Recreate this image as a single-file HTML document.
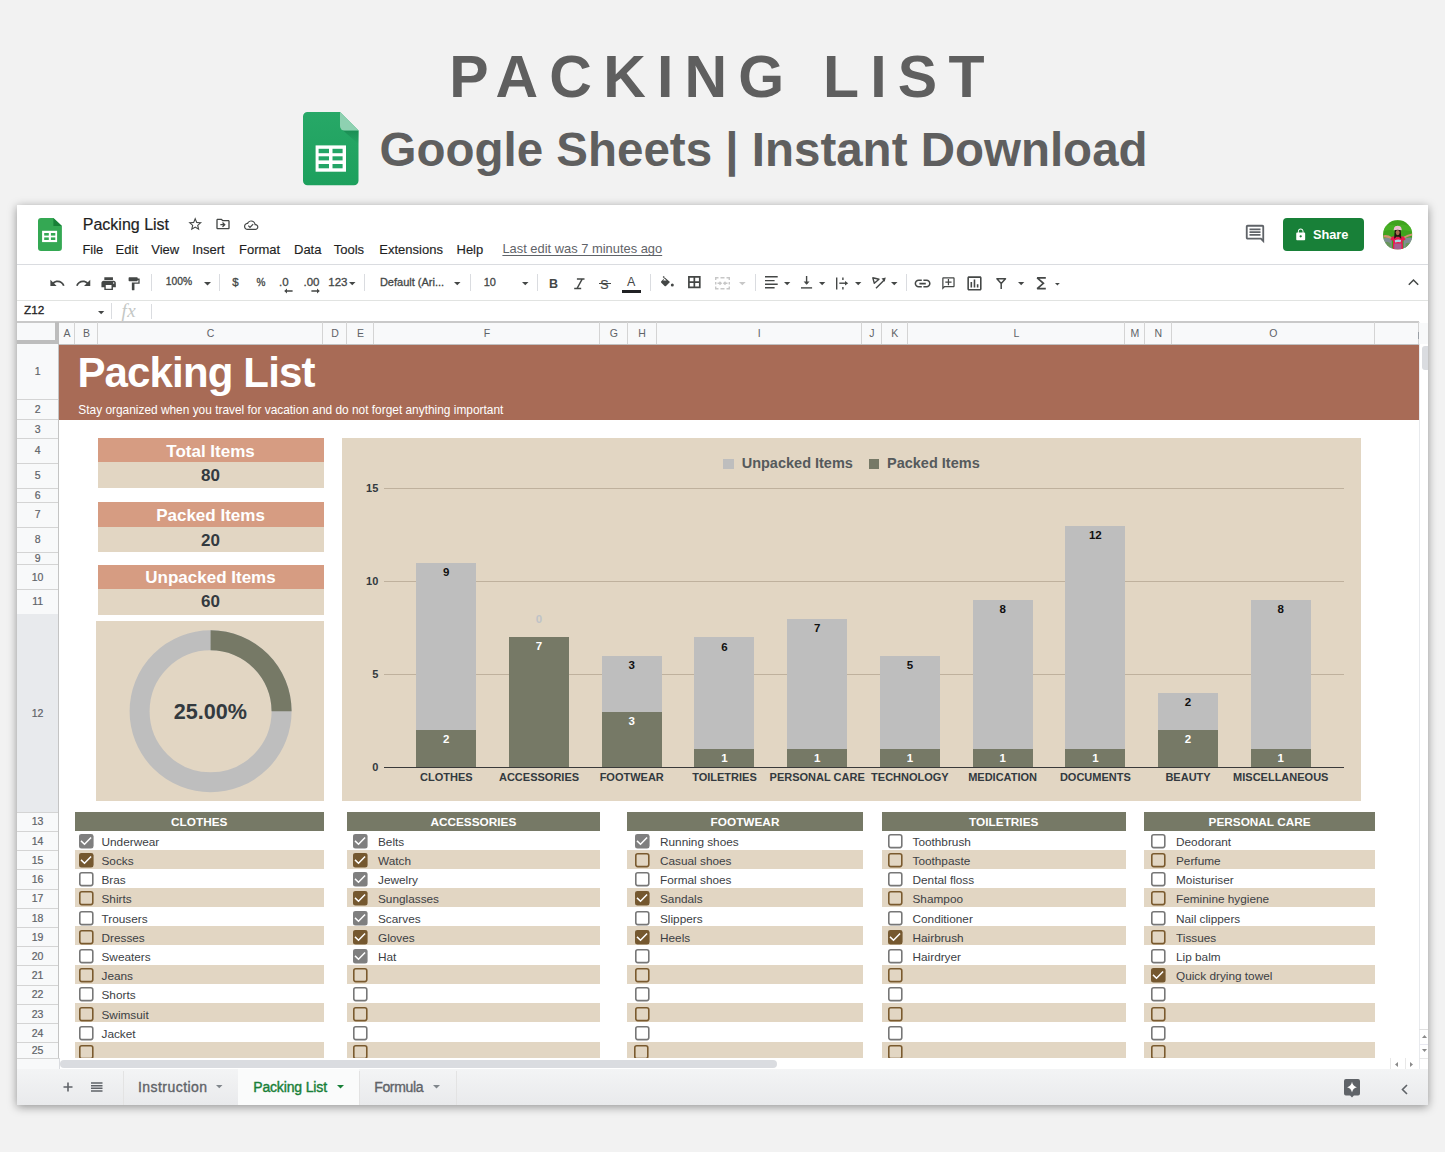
<!DOCTYPE html><html><head><meta charset="utf-8"><style>
*{margin:0;padding:0;box-sizing:border-box}
html,body{width:1445px;height:1152px;overflow:hidden;background:#f2f2f2;font-family:"Liberation Sans", sans-serif;position:relative}
.a{position:absolute}
.t{position:absolute;white-space:nowrap;line-height:1}
svg{position:absolute;overflow:visible}
</style></head><body><div class="t" style="left:722.5px;transform:translateX(-50%);top:48.06px;font-size:59px;color:#5f5f5f;font-weight:700;letter-spacing:11.2px;">PACKING LIST</div>
<svg style="left:303.4px;top:111.6px" width="56" height="74" viewBox="0 0 56 74">
<defs><linearGradient id="lg" x1="0" y1="0" x2="0" y2="1"><stop offset="0" stop-color="#27a867"/><stop offset="1" stop-color="#1da05d"/></linearGradient></defs><path d="M4.5,0 H37 L55.5,18.5 V68.7 a4.5,4.5 0 0 1 -4.5,4.5 H4.5 a4.5,4.5 0 0 1 -4.5,-4.5 V4.5 a4.5,4.5 0 0 1 4.5,-4.5z" fill="url(#lg)"/>
<defs><linearGradient id="fs" x1="0" y1="0" x2="0" y2="1"><stop offset="0" stop-color="#17834d" stop-opacity="0.7"/><stop offset="1" stop-color="#17834d" stop-opacity="0"/></linearGradient></defs><path d="M40,18.5 L55.5,32 V18.5z" fill="url(#fs)"/>
<path d="M37,0 L55.5,18.5 H41.5 a4.5,4.5 0 0 1 -4.5,-4.5z" fill="#8ed1b1"/>
<rect x="12.6" y="33.4" width="30.4" height="26.3" fill="#fff"/>
<g fill="#23a566"><rect x="15.6" y="36.8" width="10.4" height="4.4"/><rect x="29.5" y="36.8" width="10.1" height="4.4"/>
<rect x="15.6" y="44.3" width="10.4" height="4.1"/><rect x="29.5" y="44.3" width="10.1" height="4.1"/>
<rect x="15.6" y="52" width="10.4" height="4.3"/><rect x="29.5" y="52" width="10.1" height="4.3"/></g>
</svg>
<div class="t" style="left:379.5px;top:125.79px;font-size:47.5px;color:#5f5f5f;font-weight:700;letter-spacing:0px;">Google Sheets | Instant Download</div>
<div class="a" style="left:17px;top:205px;width:1411px;height:900px;background:#fff;box-shadow:0 2px 9px rgba(0,0,0,0.4);"></div>
<svg style="left:38px;top:218px" width="24" height="33" viewBox="0 0 24 33">
<path d="M3,0 H15.4 L23.9,8 V30 a3,3 0 0 1 -3,3 H3 a3,3 0 0 1 -3,-3 V3 a3,3 0 0 1 3,-3z" fill="#34a853"/>
<path d="M15.4,0 L23.9,8 H15.4z" fill="#188038"/>
<rect x="4.1" y="12.8" width="15" height="11.3" fill="#fff"/>
<g fill="#34a853"><rect x="6.2" y="15" width="4.6" height="2.6"/><rect x="12.9" y="15" width="4.4" height="2.6"/>
<rect x="6.2" y="19.4" width="4.6" height="2.6"/><rect x="12.9" y="19.4" width="4.4" height="2.6"/></g>
</svg>
<div class="t" style="left:82.8px;top:216.76px;font-size:16px;color:#1f1f1f;font-weight:400;letter-spacing:0px;-webkit-text-stroke:0.2px #1f1f1f;">Packing List</div>
<svg style="left:187px;top:216.2px" width="16.4" height="16.4" viewBox="0 0 24 24"><path fill="#444746" d="M22 9.24l-7.19-.62L12 2 9.19 8.63 2 9.24l5.46 4.73L5.82 21 12 17.27 18.18 21l-1.63-7.03L22 9.24zM12 15.4l-3.76 2.27 1-4.28-3.32-2.88 4.38-.38L12 6.1l1.71 4.04 4.38.38-3.32 2.88 1 4.28L12 15.4z"/></svg>
<svg style="left:214.6px;top:216px" width="16" height="16" viewBox="0 0 24 24"><path fill="#444746" d="M20 6h-8l-2-2H4c-1.1 0-1.99.9-1.99 2L2 18c0 1.1.9 2 2 2h16c1.1 0 2-.9 2-2V8c0-1.1-.9-2-2-2zm0 12H4V6h5.17l2 2H20v10zm-7.84-6H8v2h4.16l-1.59 1.59L11.99 17 16 13.01 11.99 9l-1.41 1.41L12.16 12z"/></svg>
<svg style="left:243.5px;top:217.6px" width="14.4" height="14.4" viewBox="0 0 24 24"><path fill="#444746" d="M19.35 10.04C18.670 6.59 15.64 4 12 4 9.11 4 6.6 5.64 5.35 8.04 2.34 8.36 0 10.91 0 14c0 3.31 2.69 6 6 6h13c2.76 0 5-2.240 5-5 0-2.64-2.05-4.78-4.65-4.96zM19 18H6c-2.21 0-4-1.79-4-4 0-2.05 1.53-3.76 3.56-3.97l1.07-.11.5-.95C8.08 7.14 9.94 6 12 6c2.62 0 4.88 1.86 5.39 4.43l.3 1.5 1.53.11c1.56.1 2.78 1.41 2.78 2.96 0 1.65-1.35 3-3 3zm-9-3.82l-2.09-2.09L6.5 13.5 10 17l6.01-6.01-1.41-1.41z"/></svg>
<div class="t" style="left:82.4px;top:242.80px;font-size:13px;color:#1f1f1f;font-weight:400;letter-spacing:0px;-webkit-text-stroke:0.15px #1f1f1f;">File</div>
<div class="t" style="left:115.6px;top:242.80px;font-size:13px;color:#1f1f1f;font-weight:400;letter-spacing:0px;-webkit-text-stroke:0.15px #1f1f1f;">Edit</div>
<div class="t" style="left:151.3px;top:242.80px;font-size:13px;color:#1f1f1f;font-weight:400;letter-spacing:0px;-webkit-text-stroke:0.15px #1f1f1f;">View</div>
<div class="t" style="left:192.2px;top:242.80px;font-size:13px;color:#1f1f1f;font-weight:400;letter-spacing:0px;-webkit-text-stroke:0.15px #1f1f1f;">Insert</div>
<div class="t" style="left:239px;top:242.80px;font-size:13px;color:#1f1f1f;font-weight:400;letter-spacing:0px;-webkit-text-stroke:0.15px #1f1f1f;">Format</div>
<div class="t" style="left:294px;top:242.80px;font-size:13px;color:#1f1f1f;font-weight:400;letter-spacing:0px;-webkit-text-stroke:0.15px #1f1f1f;">Data</div>
<div class="t" style="left:333.7px;top:242.80px;font-size:13px;color:#1f1f1f;font-weight:400;letter-spacing:0px;-webkit-text-stroke:0.15px #1f1f1f;">Tools</div>
<div class="t" style="left:379.3px;top:242.80px;font-size:13px;color:#1f1f1f;font-weight:400;letter-spacing:0px;-webkit-text-stroke:0.15px #1f1f1f;">Extensions</div>
<div class="t" style="left:456.5px;top:242.80px;font-size:13px;color:#1f1f1f;font-weight:400;letter-spacing:0px;-webkit-text-stroke:0.15px #1f1f1f;">Help</div>
<div class="t" style="left:502.4px;top:243.48px;font-size:12.9px;color:#5f6368;font-weight:400;letter-spacing:0px;text-decoration:underline;text-underline-offset:2px;">Last edit was 7 minutes ago</div>
<svg style="left:1244px;top:222.8px" width="22" height="22" viewBox="0 0 24 24"><path fill="#5f6368" d="M21.99 4c0-1.1-.89-2-1.99-2H4c-1.1 0-2 .9-2 2v12c0 1.1.9 2 2 2h14l4 4-.01-18zM20 4v13.17L18.83 16H4V4h16zM6 12h12v2H6zm0-3h12v2H6zm0-3h12v2H6z"/></svg>
<div class="a" style="left:1283.3px;top:218.1px;width:80.7px;height:33px;background:#188038;border-radius:4px;"></div>
<svg style="left:1293.6px;top:227.6px" width="13.4" height="13.4" viewBox="0 0 24 24"><path fill="#fff" d="M18 8h-1V6c0-2.76-2.240-5-5-5S7 3.24 7 6v2H6c-1.1 0-2 .9-2 2v10c0 1.1.9 2 2 2h12c1.1 0 2-.9 2-2V10c0-1.1-.9-2-2-2zm-6 9c-1.1 0-2-.9-2-2s.9-2 2-2 2 .9 2 2-.9 2-2 2zm3.4-9H8.6V6c0-1.9 1.5-3.4 3.4-3.4 1.9 0 3.4 1.5 3.4 3.4v2z"/></svg>
<div class="t" style="left:1313px;top:228.66px;font-size:12.8px;color:#fff;font-weight:700;letter-spacing:-0.05px;">Share</div>
<svg style="left:1382.5px;top:219.7px" width="29.4" height="29.6" viewBox="0 0 30 30">
<defs><clipPath id="av"><circle cx="15" cy="15" r="15"/></clipPath></defs>
<g clip-path="url(#av)">
<rect width="30" height="30" fill="#3fa31e"/>
<path d="M0,7 Q8,3 14,6 Q22,2 30,8 V12 Q20,9 12,11 Q5,9 0,12z" fill="#4db82a" opacity="0.6"/>
<path d="M0,19 Q4,17 9,19 L9,30 H0z M21,19 Q26,17 30,18 V30 H21z" fill="#9088b0" opacity="0.8"/>
<path d="M2,23 Q4,21 8,24 L7,30 H1z M23,24 Q26,22 29,25 V30 H23z" fill="#5f9a45" opacity="0.7"/>
<path d="M0.5,15.5 Q5,14.5 9,17.5 L9.5,19.5 Q5,17.5 0.5,17.8z" fill="#d09070"/>
<path d="M29.8,13.8 Q25,14.5 21,17 L20.8,19.3 Q25.5,16.8 29.8,15.8z" fill="#d09070"/>
<path d="M9,17 Q12,16 15,17.5 Q18,16 21.5,17 L23,20 L20,21 L20.5,30 H10 L10.3,21 L7.5,20z" fill="#ea1750"/>
<path d="M12,20.5 Q15,19.5 18.5,20.2 L18,22.6 Q15,21.8 12.3,22.8z" fill="#a9d4e4"/>
<path d="M11.5,24 H18.8 V30 H11.5z" fill="#8e78a8" opacity="0.75"/>
<path d="M12,10 Q15,8.6 18,10 L18.7,19 Q17,18.5 16.6,17 H13.4 Q13,18.5 11.3,19z" fill="#221410"/>
<ellipse cx="15" cy="12.7" rx="2" ry="2.7" fill="#a86e50"/>
<path d="M10.8,10.4 Q11,7.5 12.5,6.4 Q15,5.2 17.5,6.4 Q19,7.5 19.2,10.4 Q15,9.2 10.8,10.4z" fill="#ecc0d2"/>
</g></svg>
<div class="a" style="left:17px;top:264px;width:1411px;height:1px;background:#dadce0;"></div>
<svg style="left:49.1px;top:275.2px" width="16.66" height="16.66" viewBox="0 0 24 24"><path fill="#444746" d="M12.5 8c-2.65 0-5.05.99-6.9 2.6L2 7v9h9l-3.62-3.62c1.39-1.16 3.16-1.88 5.12-1.88 3.54 0 6.55 2.31 7.6 5.5l2.37-.78C21.08 11.03 17.15 8 12.5 8z" /></svg>
<svg style="left:74.6px;top:275.4px" width="16.66" height="16.66" viewBox="0 0 24 24"><path fill="#444746" d="M18.4 10.6C16.55 8.99 14.15 8 11.5 8c-4.65 0-8.58 3.03-9.96 7.22L3.9 16c1.05-3.19 4.05-5.5 7.6-5.5 1.95 0 3.730.72 5.12 1.88L13 16h9V7l-3.6 3.6z" /></svg>
<svg style="left:99.8px;top:274.6px" width="17.28" height="17.28" viewBox="0 0 24 24"><path fill="#444746" d="M19 8H5c-1.66 0-3 1.34-3 3v6h4v4h12v-4h4v-6c0-1.66-1.34-3-3-3zm-3 11H8v-5h8v5zm3-7c-.55 0-1-.45-1-1s.45-1 1-1 1 .45 1 1-.45 1-1 1zm-1-9H6v4h12V3z" /></svg>
<svg style="left:125.9px;top:275.5px" width="15.60" height="15.60" viewBox="0 0 24 24"><path fill="#444746" d="M18 4V3c0-.55-.45-1-1-1H5c-.55 0-1 .45-1 1v4c0 .55.45 1 1 1h12c.55 0 1-.45 1-1V6h1v4H9v11c0 .55.45 1 1 1h2c.55 0 1-.45 1-1v-9h8V4h-3z" /></svg>
<div class="a" style="left:151px;top:273.8px;width:1px;height:17.2px;background:#dadce0;"></div>
<div class="t" style="left:165.8px;top:277.28px;font-size:10.3px;color:#444746;font-weight:400;letter-spacing:0px;-webkit-text-stroke:0.3px #444746;">100%</div>
<svg style="left:204px;top:281.5px" width="7" height="3.5" viewBox="0 0 7 3.5"><path d="M0,0 H7 L3.5,3.5z" fill="#444746"/></svg>
<div class="a" style="left:219px;top:273.8px;width:1px;height:17.2px;background:#dadce0;"></div>
<div class="t" style="left:232.2px;top:277.27px;font-size:11.5px;color:#444746;font-weight:400;letter-spacing:0px;-webkit-text-stroke:0.3px #444746;">$</div>
<div class="t" style="left:256.6px;top:278.04px;font-size:10px;color:#444746;font-weight:400;letter-spacing:0px;-webkit-text-stroke:0.3px #444746;">%</div>
<div class="t" style="left:279px;top:276.77px;font-size:11.5px;color:#444746;font-weight:400;letter-spacing:0px;-webkit-text-stroke:0.3px #444746;">.0</div>
<svg style="left:283.5px;top:288px" width="9" height="6" viewBox="0 0 9 6"><path d="M0.2,3 L3,0.6 V2.3 H8.6 V3.7 H3 V5.4z" fill="#444746"/></svg>
<div class="t" style="left:303.5px;top:276.77px;font-size:11.5px;color:#444746;font-weight:400;letter-spacing:0px;-webkit-text-stroke:0.3px #444746;">.00</div>
<svg style="left:310.5px;top:288px" width="9" height="6" viewBox="0 0 9 6"><path d="M8.8,3 L6,0.6 V2.3 H0.4 V3.7 H6 V5.4z" fill="#444746"/></svg>
<div class="t" style="left:328.3px;top:276.77px;font-size:11.5px;color:#444746;font-weight:400;letter-spacing:0px;-webkit-text-stroke:0.3px #444746;">123</div>
<svg style="left:349px;top:281.8px" width="6.5" height="3.25" viewBox="0 0 6.5 3.25"><path d="M0,0 H6.5 L3.25,3.25z" fill="#444746"/></svg>
<div class="a" style="left:364.4px;top:273.8px;width:1px;height:17.2px;background:#dadce0;"></div>
<div class="t" style="left:379.9px;top:277.19px;font-size:11px;color:#444746;font-weight:400;letter-spacing:0px;-webkit-text-stroke:0.3px #444746;">Default (Ari...</div>
<svg style="left:453.8px;top:282px" width="6.5" height="3.25" viewBox="0 0 6.5 3.25"><path d="M0,0 H6.5 L3.25,3.25z" fill="#444746"/></svg>
<div class="a" style="left:469.6px;top:273.8px;width:1px;height:17.2px;background:#dadce0;"></div>
<div class="t" style="left:483.7px;top:276.69px;font-size:11px;color:#444746;font-weight:400;letter-spacing:0px;-webkit-text-stroke:0.3px #444746;">10</div>
<svg style="left:522px;top:282px" width="6.5" height="3.25" viewBox="0 0 6.5 3.25"><path d="M0,0 H6.5 L3.25,3.25z" fill="#444746"/></svg>
<div class="a" style="left:537.4px;top:273.8px;width:1px;height:17.2px;background:#dadce0;"></div>
<div class="t" style="left:549px;top:278.02px;font-size:12.5px;color:#444746;font-weight:700;letter-spacing:0px;">B</div>
<svg style="left:573px;top:277.5px" width="12.5" height="11.5" viewBox="0 0 12.5 11.5"><path d="M3.9,0.9 H11.5 M9.3,0.9 L4,10.5 M1.2,10.5 H8.2" fill="none" stroke="#444746" stroke-width="1.5"/></svg>
<div class="t" style="left:600.3px;top:278.62px;font-size:12.5px;color:#444746;font-weight:400;letter-spacing:0px;-webkit-text-stroke:0.2px #444746;">S</div>
<div class="a" style="left:598.9px;top:283px;width:12.6px;height:1.4px;background:#444746;"></div>
<div class="t" style="left:627px;top:275.62px;font-size:12.5px;color:#444746;font-weight:400;letter-spacing:0px;">A</div>
<div class="a" style="left:622.1px;top:290.1px;width:19.4px;height:3.3px;background:#202124;"></div>
<div class="a" style="left:649.7px;top:273.8px;width:1px;height:17.2px;background:#dadce0;"></div>
<svg style="left:660.6px;top:276.7px" width="13" height="10" viewBox="0 0 13 10"><path d="M3.2,0 L9,5 L5,9 a1,1 0 0 1 -1.4,0 L0.3,5.7 a1,1 0 0 1 0,-1.4 L3.6,1 z" fill="#444746"/><path d="M3.2,0.5 L2.2,-0.5" stroke="#444746" stroke-width="1.4"/><path d="M0.8,5 H8.2" stroke="#fff" stroke-width="0" /><circle cx="11.3" cy="8" r="1.5" fill="#444746"/><path d="M2.2,3.6 L5.5,3.6 L3.4,1.5z" fill="#fff"/></svg>
<svg style="left:688.3px;top:276.4px" width="12.7" height="12.2" viewBox="0 0 12.7 12.2"><path d="M0.9,0.9 H11.8 V11.3 H0.9z M6.35,0.9 V11.3 M0.9,6.1 H11.8" fill="none" stroke="#444746" stroke-width="1.7"/></svg>
<svg style="left:715px;top:277px" width="15" height="12.5" viewBox="0 0 15 12.5"><path d="M0.7,3 V0.7 H3.5 M11.5,0.7 H14.3 V3 M14.3,9.5 V11.8 H11.5 M3.5,11.8 H0.7 V9.5 M0.7,5 V7.5 M14.3,5 V7.5 M5.5,0.7 H9.5 M5.5,11.8 H9.5" fill="none" stroke="#c7c7c7" stroke-width="1.4"/><path d="M2.5,6.25 H6 M4.5,4.8 L6.2,6.25 L4.5,7.7 M12.5,6.25 H9 M10.5,4.8 L8.8,6.25 L10.5,7.7" fill="none" stroke="#c7c7c7" stroke-width="1.3"/></svg>
<svg style="left:739.4px;top:281.5px" width="6.7" height="3.35" viewBox="0 0 6.7 3.35"><path d="M0,0 H6.7 L3.35,3.35z" fill="#c7c7c7"/></svg>
<div class="a" style="left:754.6px;top:273.8px;width:1px;height:17.2px;background:#dadce0;"></div>
<svg style="left:764.6px;top:276.4px" width="13" height="12.5" viewBox="0 0 13 12.5"><path d="M0,0.7 H12.7 M0,4.6 H9.6 M0,8.2 H12.7 M0,11.8 H9.6" stroke="#444746" stroke-width="1.4"/></svg>
<svg style="left:783.5px;top:282px" width="6.3" height="3.15" viewBox="0 0 6.3 3.15"><path d="M0,0 H6.3 L3.15,3.15z" fill="#444746"/></svg>
<svg style="left:801px;top:276.3px" width="11.2" height="12.6" viewBox="0 0 11.2 12.6"><path d="M0,11.9 H11.1" stroke="#444746" stroke-width="1.4"/><path d="M5.6,0 V8" stroke="#444746" stroke-width="1.4"/><path d="M2.6,5.5 L5.6,8.8 L8.6,5.5z" fill="#444746"/></svg>
<svg style="left:819.4px;top:282px" width="6.3" height="3.15" viewBox="0 0 6.3 3.15"><path d="M0,0 H6.3 L3.15,3.15z" fill="#444746"/></svg>
<svg style="left:836.3px;top:276.5px" width="13" height="13" viewBox="0 0 13 13"><path d="M0.7,0.5 V12.5" stroke="#444746" stroke-width="1.4"/><path d="M6.9,0.5 V3 M6.9,10 V12.5" stroke="#444746" stroke-width="1.4"/><path d="M3.3,6.2 H10" stroke="#444746" stroke-width="1.4"/><path d="M9,3.9 L12.2,6.2 L9,8.5z" fill="#444746"/></svg>
<svg style="left:854.7px;top:282px" width="6.4" height="3.2" viewBox="0 0 6.4 3.2"><path d="M0,0 H6.4 L3.2,3.2z" fill="#444746"/></svg>
<svg style="left:871.8px;top:276.8px" width="14" height="12" viewBox="0 0 14 12"><path d="M0.8,0.8 L7,2.2 L2.3,6.2z" fill="none" stroke="#444746" stroke-width="1.4" stroke-linejoin="round"/><path d="M4,11.3 L12.5,2.8" stroke="#444746" stroke-width="1.4"/><path d="M9.5,1.6 L13.8,0.4 L12.6,4.7z" fill="#444746"/></svg>
<svg style="left:890.5px;top:282px" width="6.5" height="3.25" viewBox="0 0 6.5 3.25"><path d="M0,0 H6.5 L3.25,3.25z" fill="#444746"/></svg>
<div class="a" style="left:905.8px;top:273.8px;width:1px;height:17.2px;background:#dadce0;"></div>
<svg style="left:913.4px;top:273.8px" width="19.20" height="19.20" viewBox="0 0 24 24"><path fill="#444746" d="M3.9 12c0-1.71 1.39-3.1 3.1-3.1h4V7H7c-2.76 0-5 2.24-5 5s2.24 5 5 5h4v-1.9H7c-1.71 0-3.1-1.39-3.1-3.1zM8 13h8v-2H8v2zm9-6h-4v1.9h4c1.71 0 3.1 1.39 3.1 3.1s-1.39 3.1-3.1 3.1h-4V17h4c2.76 0 5-2.24 5-5s-2.24-5-5-5z" /></svg>
<svg style="left:940.9px;top:276.2px" width="14.9" height="14.9" viewBox="0 0 24 24"><g transform="translate(24,0) scale(-1,1)"><path fill="#444746" d="M22 4c0-1.1-.9-2-2-2H4c-1.1 0-2 .9-2 2v12c0 1.1.9 2 2 2h14l4 4V4zm-2 13.17L18.83 16H4V4h16v13.17zM13 5h-2v4H7v2h4v4h2v-4h4V9h-4z"/></g></svg>
<svg style="left:964.8px;top:273.8px" width="18.96" height="18.96" viewBox="0 0 24 24"><path fill="#444746" d="M19 3H5c-1.1 0-2 .9-2 2v14c0 1.1.9 2 2 2h14c1.1 0 2-.9 2-2V5c0-1.1-.9-2-2-2zm0 16H5V5h14v14zM7 10h2v7H7zm4-3h2v10h-2zm4 6h2v4h-2z" /></svg>
<svg style="left:995.8px;top:277.7px" width="10.4" height="11.2" viewBox="0 0 10.4 11.2"><path d="M0.9,0.8 H9.5 L5.2,5.6z M5.2,5.3 V11" fill="none" stroke="#444746" stroke-width="1.5" stroke-linejoin="round"/></svg>
<svg style="left:1018px;top:282px" width="6.3" height="3.15" viewBox="0 0 6.3 3.15"><path d="M0,0 H6.3 L3.15,3.15z" fill="#444746"/></svg>
<svg style="left:1036px;top:276.5px" width="10" height="13" viewBox="0 0 10 13"><path d="M9.8,0.9 H1.2 L7.4,6.3 L1.2,11.7 H9.8" fill="none" stroke="#444746" stroke-width="1.7" stroke-linejoin="miter" stroke-miterlimit="2"/></svg>
<svg style="left:1055.2px;top:282.5px" width="4.8" height="2.4" viewBox="0 0 4.8 2.4"><path d="M0,0 H4.8 L2.4,2.4z" fill="#444746"/></svg>
<svg style="left:1407.6px;top:278.8px" width="11" height="6.5" viewBox="0 0 11 6.5"><path d="M0.8,5.8 L5.5,1 L10.2,5.8" fill="none" stroke="#444746" stroke-width="1.5"/></svg>
<div class="a" style="left:17px;top:300px;width:1411px;height:1px;background:#e1e3e1;"></div>
<div class="t" style="left:24.1px;top:305.31px;font-size:11.8px;color:#1f1f1f;font-weight:400;letter-spacing:0px;-webkit-text-stroke:0.3px #1f1f1f;">Z12</div>
<svg style="left:98px;top:310.5px" width="6.3" height="3.15" viewBox="0 0 6.3 3.15"><path d="M0,0 H6.3 L3.15,3.15z" fill="#444746"/></svg>
<div class="a" style="left:110.5px;top:303px;width:1px;height:16px;background:#dadce0;"></div>
<div class="t" style="left:121.5px;top:301px;font-family:'Liberation Serif';font-style:italic;font-size:19px;color:#c4c7c5;letter-spacing:0.5px">fx</div>
<div class="a" style="left:150.9px;top:303.5px;width:1px;height:15px;background:#dadce0;"></div>
<div class="a" style="left:17px;top:321.4px;width:1402px;height:1.2px;background:#c9c9c9;"></div>
<div class="a" style="left:1419px;top:321.5px;width:9px;height:1px;background:#dadce0;"></div>
<div class="a" style="left:17px;top:322.6px;width:1402px;height:21.4px;background:#f8f9fa;"></div>
<div class="a" style="left:74.1px;top:322px;width:1px;height:22px;background:#d4d4d4;"></div>
<div class="t" style="left:67.0px;transform:translateX(-50%);top:328.31px;font-size:10.5px;color:#5f6368;font-weight:400;letter-spacing:0px;">A</div>
<div class="a" style="left:97.1px;top:322px;width:1px;height:22px;background:#d4d4d4;"></div>
<div class="t" style="left:86.5px;transform:translateX(-50%);top:328.31px;font-size:10.5px;color:#5f6368;font-weight:400;letter-spacing:0px;">B</div>
<div class="a" style="left:322.1px;top:322px;width:1px;height:22px;background:#d4d4d4;"></div>
<div class="t" style="left:210.5px;transform:translateX(-50%);top:328.31px;font-size:10.5px;color:#5f6368;font-weight:400;letter-spacing:0px;">C</div>
<div class="a" style="left:346.1px;top:322px;width:1px;height:22px;background:#d4d4d4;"></div>
<div class="t" style="left:335.0px;transform:translateX(-50%);top:328.31px;font-size:10.5px;color:#5f6368;font-weight:400;letter-spacing:0px;">D</div>
<div class="a" style="left:373.1px;top:322px;width:1px;height:22px;background:#d4d4d4;"></div>
<div class="t" style="left:360.5px;transform:translateX(-50%);top:328.31px;font-size:10.5px;color:#5f6368;font-weight:400;letter-spacing:0px;">E</div>
<div class="a" style="left:599.1px;top:322px;width:1px;height:22px;background:#d4d4d4;"></div>
<div class="t" style="left:487.0px;transform:translateX(-50%);top:328.31px;font-size:10.5px;color:#5f6368;font-weight:400;letter-spacing:0px;">F</div>
<div class="a" style="left:626.6px;top:322px;width:1px;height:22px;background:#d4d4d4;"></div>
<div class="t" style="left:613.75px;transform:translateX(-50%);top:328.31px;font-size:10.5px;color:#5f6368;font-weight:400;letter-spacing:0px;">G</div>
<div class="a" style="left:655.6px;top:322px;width:1px;height:22px;background:#d4d4d4;"></div>
<div class="t" style="left:642.0px;transform:translateX(-50%);top:328.31px;font-size:10.5px;color:#5f6368;font-weight:400;letter-spacing:0px;">H</div>
<div class="a" style="left:861.1px;top:322px;width:1px;height:22px;background:#d4d4d4;"></div>
<div class="t" style="left:759.25px;transform:translateX(-50%);top:328.31px;font-size:10.5px;color:#5f6368;font-weight:400;letter-spacing:0px;">I</div>
<div class="a" style="left:880.6px;top:322px;width:1px;height:22px;background:#d4d4d4;"></div>
<div class="t" style="left:871.75px;transform:translateX(-50%);top:328.31px;font-size:10.5px;color:#5f6368;font-weight:400;letter-spacing:0px;">J</div>
<div class="a" style="left:907.1px;top:322px;width:1px;height:22px;background:#d4d4d4;"></div>
<div class="t" style="left:894.75px;transform:translateX(-50%);top:328.31px;font-size:10.5px;color:#5f6368;font-weight:400;letter-spacing:0px;">K</div>
<div class="a" style="left:1124.1px;top:322px;width:1px;height:22px;background:#d4d4d4;"></div>
<div class="t" style="left:1016.5px;transform:translateX(-50%);top:328.31px;font-size:10.5px;color:#5f6368;font-weight:400;letter-spacing:0px;">L</div>
<div class="a" style="left:1143.6px;top:322px;width:1px;height:22px;background:#d4d4d4;"></div>
<div class="t" style="left:1134.75px;transform:translateX(-50%);top:328.31px;font-size:10.5px;color:#5f6368;font-weight:400;letter-spacing:0px;">M</div>
<div class="a" style="left:1171.1px;top:322px;width:1px;height:22px;background:#d4d4d4;"></div>
<div class="t" style="left:1158.25px;transform:translateX(-50%);top:328.31px;font-size:10.5px;color:#5f6368;font-weight:400;letter-spacing:0px;">N</div>
<div class="a" style="left:1373.6px;top:322px;width:1px;height:22px;background:#d4d4d4;"></div>
<div class="t" style="left:1273.25px;transform:translateX(-50%);top:328.31px;font-size:10.5px;color:#5f6368;font-weight:400;letter-spacing:0px;">O</div>
<div class="a" style="left:1418.1px;top:322px;width:1px;height:22px;background:#d4d4d4;"></div>
<div class="a" style="left:1417.6px;top:331.5px;width:1.2px;height:7px;background:#9aa0a6;"></div>
<div class="a" style="left:17px;top:343.5px;width:1402px;height:1px;background:#c0c0c0;"></div>
<div class="a" style="left:54.5px;top:322px;width:4.5px;height:22px;background:#bdbdbd;"></div>
<div class="a" style="left:17px;top:339.8px;width:42px;height:4px;background:#bdbdbd;"></div>
<div class="a" style="left:17px;top:344px;width:42px;height:714px;background:#f8f9fa;"></div>
<div class="a" style="left:17px;top:398.9px;width:42px;height:1px;background:#d4d4d4;"></div>
<div class="t" style="left:37.6px;transform:translateX(-50%);top:366.31px;font-size:10.5px;color:#5f6368;font-weight:400;letter-spacing:0px;-webkit-text-stroke:0.2px #5f6368;">1</div>
<div class="a" style="left:17px;top:418.9px;width:42px;height:1px;background:#d4d4d4;"></div>
<div class="t" style="left:37.6px;transform:translateX(-50%);top:404.01px;font-size:10.5px;color:#5f6368;font-weight:400;letter-spacing:0px;-webkit-text-stroke:0.2px #5f6368;">2</div>
<div class="a" style="left:17px;top:437.9px;width:42px;height:1px;background:#d4d4d4;"></div>
<div class="t" style="left:37.6px;transform:translateX(-50%);top:423.51px;font-size:10.5px;color:#5f6368;font-weight:400;letter-spacing:0px;-webkit-text-stroke:0.2px #5f6368;">3</div>
<div class="a" style="left:17px;top:462.5px;width:42px;height:1px;background:#d4d4d4;"></div>
<div class="t" style="left:37.6px;transform:translateX(-50%);top:445.31px;font-size:10.5px;color:#5f6368;font-weight:400;letter-spacing:0px;-webkit-text-stroke:0.2px #5f6368;">4</div>
<div class="a" style="left:17px;top:487.5px;width:42px;height:1px;background:#d4d4d4;"></div>
<div class="t" style="left:37.6px;transform:translateX(-50%);top:470.11px;font-size:10.5px;color:#5f6368;font-weight:400;letter-spacing:0px;-webkit-text-stroke:0.2px #5f6368;">5</div>
<div class="a" style="left:17px;top:501.5px;width:42px;height:1px;background:#d4d4d4;"></div>
<div class="t" style="left:37.6px;transform:translateX(-50%);top:489.61px;font-size:10.5px;color:#5f6368;font-weight:400;letter-spacing:0px;-webkit-text-stroke:0.2px #5f6368;">6</div>
<div class="a" style="left:17px;top:526.5px;width:42px;height:1px;background:#d4d4d4;"></div>
<div class="t" style="left:37.6px;transform:translateX(-50%);top:509.11px;font-size:10.5px;color:#5f6368;font-weight:400;letter-spacing:0px;-webkit-text-stroke:0.2px #5f6368;">7</div>
<div class="a" style="left:17px;top:551.7px;width:42px;height:1px;background:#d4d4d4;"></div>
<div class="t" style="left:37.6px;transform:translateX(-50%);top:534.21px;font-size:10.5px;color:#5f6368;font-weight:400;letter-spacing:0px;-webkit-text-stroke:0.2px #5f6368;">8</div>
<div class="a" style="left:17px;top:564.0px;width:42px;height:1px;background:#d4d4d4;"></div>
<div class="t" style="left:37.6px;transform:translateX(-50%);top:552.96px;font-size:10.5px;color:#5f6368;font-weight:400;letter-spacing:0px;-webkit-text-stroke:0.2px #5f6368;">9</div>
<div class="a" style="left:17px;top:589.0px;width:42px;height:1px;background:#d4d4d4;"></div>
<div class="t" style="left:37.6px;transform:translateX(-50%);top:571.61px;font-size:10.5px;color:#5f6368;font-weight:400;letter-spacing:0px;-webkit-text-stroke:0.2px #5f6368;">10</div>
<div class="a" style="left:17px;top:613.5px;width:42px;height:1px;background:#d4d4d4;"></div>
<div class="t" style="left:37.6px;transform:translateX(-50%);top:596.36px;font-size:10.5px;color:#5f6368;font-weight:400;letter-spacing:0px;-webkit-text-stroke:0.2px #5f6368;">11</div>
<div class="a" style="left:17px;top:614px;width:40.7px;height:198px;background:#e8eaed;"></div>
<div class="a" style="left:17px;top:811.5px;width:42px;height:1px;background:#d4d4d4;"></div>
<div class="t" style="left:37.6px;transform:translateX(-50%);top:707.61px;font-size:10.5px;color:#5f6368;font-weight:400;letter-spacing:0px;-webkit-text-stroke:0.2px #5f6368;">12</div>
<div class="a" style="left:17px;top:831.0px;width:42px;height:1px;background:#d4d4d4;"></div>
<div class="t" style="left:37.6px;transform:translateX(-50%);top:816.36px;font-size:10.5px;color:#5f6368;font-weight:400;letter-spacing:0px;-webkit-text-stroke:0.2px #5f6368;">13</div>
<div class="a" style="left:17px;top:850.2px;width:42px;height:1px;background:#d4d4d4;"></div>
<div class="t" style="left:37.6px;transform:translateX(-50%);top:835.71px;font-size:10.5px;color:#5f6368;font-weight:400;letter-spacing:0px;-webkit-text-stroke:0.2px #5f6368;">14</div>
<div class="a" style="left:17px;top:869.4000000000001px;width:42px;height:1px;background:#d4d4d4;"></div>
<div class="t" style="left:37.6px;transform:translateX(-50%);top:854.91px;font-size:10.5px;color:#5f6368;font-weight:400;letter-spacing:0px;-webkit-text-stroke:0.2px #5f6368;">15</div>
<div class="a" style="left:17px;top:888.6000000000001px;width:42px;height:1px;background:#d4d4d4;"></div>
<div class="t" style="left:37.6px;transform:translateX(-50%);top:874.11px;font-size:10.5px;color:#5f6368;font-weight:400;letter-spacing:0px;-webkit-text-stroke:0.2px #5f6368;">16</div>
<div class="a" style="left:17px;top:907.8000000000002px;width:42px;height:1px;background:#d4d4d4;"></div>
<div class="t" style="left:37.6px;transform:translateX(-50%);top:893.31px;font-size:10.5px;color:#5f6368;font-weight:400;letter-spacing:0px;-webkit-text-stroke:0.2px #5f6368;">17</div>
<div class="a" style="left:17px;top:927.0000000000002px;width:42px;height:1px;background:#d4d4d4;"></div>
<div class="t" style="left:37.6px;transform:translateX(-50%);top:912.51px;font-size:10.5px;color:#5f6368;font-weight:400;letter-spacing:0px;-webkit-text-stroke:0.2px #5f6368;">18</div>
<div class="a" style="left:17px;top:946.2000000000003px;width:42px;height:1px;background:#d4d4d4;"></div>
<div class="t" style="left:37.6px;transform:translateX(-50%);top:931.71px;font-size:10.5px;color:#5f6368;font-weight:400;letter-spacing:0px;-webkit-text-stroke:0.2px #5f6368;">19</div>
<div class="a" style="left:17px;top:965.4000000000003px;width:42px;height:1px;background:#d4d4d4;"></div>
<div class="t" style="left:37.6px;transform:translateX(-50%);top:950.91px;font-size:10.5px;color:#5f6368;font-weight:400;letter-spacing:0px;-webkit-text-stroke:0.2px #5f6368;">20</div>
<div class="a" style="left:17px;top:984.6000000000004px;width:42px;height:1px;background:#d4d4d4;"></div>
<div class="t" style="left:37.6px;transform:translateX(-50%);top:970.11px;font-size:10.5px;color:#5f6368;font-weight:400;letter-spacing:0px;-webkit-text-stroke:0.2px #5f6368;">21</div>
<div class="a" style="left:17px;top:1003.8000000000004px;width:42px;height:1px;background:#d4d4d4;"></div>
<div class="t" style="left:37.6px;transform:translateX(-50%);top:989.31px;font-size:10.5px;color:#5f6368;font-weight:400;letter-spacing:0px;-webkit-text-stroke:0.2px #5f6368;">22</div>
<div class="a" style="left:17px;top:1023.0000000000005px;width:42px;height:1px;background:#d4d4d4;"></div>
<div class="t" style="left:37.6px;transform:translateX(-50%);top:1008.51px;font-size:10.5px;color:#5f6368;font-weight:400;letter-spacing:0px;-webkit-text-stroke:0.2px #5f6368;">23</div>
<div class="a" style="left:17px;top:1042.2000000000005px;width:42px;height:1px;background:#d4d4d4;"></div>
<div class="t" style="left:37.6px;transform:translateX(-50%);top:1027.71px;font-size:10.5px;color:#5f6368;font-weight:400;letter-spacing:0px;-webkit-text-stroke:0.2px #5f6368;">24</div>
<div class="a" style="left:17px;top:1057.5px;width:42px;height:1px;background:#d4d4d4;"></div>
<div class="t" style="left:37.6px;transform:translateX(-50%);top:1044.96px;font-size:10.5px;color:#5f6368;font-weight:400;letter-spacing:0px;-webkit-text-stroke:0.2px #5f6368;">25</div>
<div class="a" style="left:57.7px;top:344px;width:1.1px;height:714px;background:#c4c4c4;"></div>
<div class="a" style="left:59px;top:344.5px;width:1360px;height:75.1px;background:#a86b56;"></div>
<div class="t" style="left:77.4px;top:352.05px;font-size:42px;color:#fff;font-weight:700;letter-spacing:-0.85px;">Packing List</div>
<div class="t" style="left:78.3px;top:404.53px;font-size:11.9px;color:#fff;font-weight:400;letter-spacing:0px;">Stay organized when you travel for vacation and do not forget anything important</div>
<div class="a" style="left:97.5px;top:438px;width:226px;height:24.399999999999977px;background:#d69c82;"></div>
<div class="a" style="left:97.5px;top:462.4px;width:226px;height:25.700000000000045px;background:#e2d6c3;"></div>
<div class="t" style="left:210.5px;transform:translateX(-50%);top:442.51px;font-size:17px;color:#fff;font-weight:700;letter-spacing:0px;">Total Items</div>
<div class="t" style="left:210.5px;transform:translateX(-50%);top:467.41px;font-size:17px;color:#333a3f;font-weight:700;letter-spacing:0px;">80</div>
<div class="a" style="left:97.5px;top:502.3px;width:226px;height:24.400000000000034px;background:#d69c82;"></div>
<div class="a" style="left:97.5px;top:526.7px;width:226px;height:25.399999999999977px;background:#e2d6c3;"></div>
<div class="t" style="left:210.5px;transform:translateX(-50%);top:507.01px;font-size:17px;color:#fff;font-weight:700;letter-spacing:0px;">Packed Items</div>
<div class="t" style="left:210.5px;transform:translateX(-50%);top:531.61px;font-size:17px;color:#333a3f;font-weight:700;letter-spacing:0px;">20</div>
<div class="a" style="left:97.5px;top:564.9px;width:226px;height:24.200000000000045px;background:#d69c82;"></div>
<div class="a" style="left:97.5px;top:589.1px;width:226px;height:25.600000000000023px;background:#e2d6c3;"></div>
<div class="t" style="left:210.5px;transform:translateX(-50%);top:568.81px;font-size:17px;color:#fff;font-weight:700;letter-spacing:0px;">Unpacked Items</div>
<div class="t" style="left:210.5px;transform:translateX(-50%);top:593.31px;font-size:17px;color:#333a3f;font-weight:700;letter-spacing:0px;">60</div>
<div class="a" style="left:96.3px;top:621.3px;width:228.2px;height:180px;background:#e2d6c3;"></div>
<svg style="left:0;top:0" width="1445" height="1152" viewBox="0 0 1445 1152">
<circle cx="210.6" cy="711.3" r="71.0" fill="none" stroke="#bebebe" stroke-width="20"/>
<path d="M210.6,630.3 A81,81 0 0 1 291.6,711.3 H271.6 A61,61 0 0 0 210.6,650.3z" fill="#767966"/>
</svg>
<div class="t" style="left:210.3px;transform:translateX(-50%);top:701.42px;font-size:21.6px;color:#333a3f;font-weight:700;letter-spacing:0px;">25.00%</div>
<div class="a" style="left:342px;top:438px;width:1019px;height:363.3px;background:#e2d6c3;"></div>
<div class="a" style="left:723px;top:458.6px;width:10.7px;height:10.7px;background:#bebebe;"></div>
<div class="t" style="left:741.7px;top:455.73px;font-size:14.5px;color:#555a5c;font-weight:700;letter-spacing:0px;">Unpacked Items</div>
<div class="a" style="left:868.5px;top:458.6px;width:10.7px;height:10.7px;background:#767966;"></div>
<div class="t" style="left:887px;top:455.73px;font-size:14.5px;color:#555a5c;font-weight:700;letter-spacing:0px;">Packed Items</div>
<div class="a" style="left:384px;top:488.29999999999995px;width:960px;height:1.2px;background:#bfb19d;"></div>
<div class="a" style="left:384px;top:581.0999999999999px;width:960px;height:1.2px;background:#bfb19d;"></div>
<div class="a" style="left:384px;top:673.9px;width:960px;height:1.2px;background:#bfb19d;"></div>
<div class="t" style="right:1066.7px;top:483.39px;font-size:11px;color:#333a3f;font-weight:700;letter-spacing:0px;">15</div>
<div class="t" style="right:1066.7px;top:576.19px;font-size:11px;color:#333a3f;font-weight:700;letter-spacing:0px;">10</div>
<div class="t" style="right:1066.7px;top:668.99px;font-size:11px;color:#333a3f;font-weight:700;letter-spacing:0px;">5</div>
<div class="t" style="right:1066.7px;top:761.79px;font-size:11px;color:#333a3f;font-weight:700;letter-spacing:0px;">0</div>
<div class="a" style="left:416.3px;top:563.14px;width:60px;height:167.03999999999996px;background:#bebebe;"></div>
<div class="t" style="left:446.3px;transform:translateX(-50%);top:567.31px;font-size:11.5px;color:#111;font-weight:700;letter-spacing:0px;">9</div>
<div class="a" style="left:416.3px;top:730.18px;width:60px;height:37.120000000000005px;background:#767966;"></div>
<div class="t" style="left:446.3px;transform:translateX(-50%);top:734.15px;font-size:11.5px;color:#fff;font-weight:700;letter-spacing:0px;">2</div>
<div class="t" style="left:446.3px;transform:translateX(-50%);top:771.99px;font-size:11px;color:#333a3f;font-weight:700;letter-spacing:0px;">CLOTHES</div>
<div class="t" style="left:539.02px;transform:translateX(-50%);top:614.45px;font-size:11.5px;color:#bfc3c7;font-weight:700;letter-spacing:0px;">0</div>
<div class="a" style="left:509.02px;top:637.38px;width:60px;height:129.91999999999996px;background:#767966;"></div>
<div class="t" style="left:539.02px;transform:translateX(-50%);top:641.35px;font-size:11.5px;color:#fff;font-weight:700;letter-spacing:0px;">7</div>
<div class="t" style="left:539.02px;transform:translateX(-50%);top:771.99px;font-size:11px;color:#333a3f;font-weight:700;letter-spacing:0px;">ACCESSORIES</div>
<div class="a" style="left:601.74px;top:655.9399999999999px;width:60px;height:55.680000000000064px;background:#bebebe;"></div>
<div class="t" style="left:631.74px;transform:translateX(-50%);top:660.11px;font-size:11.5px;color:#111;font-weight:700;letter-spacing:0px;">3</div>
<div class="a" style="left:601.74px;top:711.62px;width:60px;height:55.67999999999995px;background:#767966;"></div>
<div class="t" style="left:631.74px;transform:translateX(-50%);top:715.59px;font-size:11.5px;color:#fff;font-weight:700;letter-spacing:0px;">3</div>
<div class="t" style="left:631.74px;transform:translateX(-50%);top:771.99px;font-size:11px;color:#333a3f;font-weight:700;letter-spacing:0px;">FOOTWEAR</div>
<div class="a" style="left:694.46px;top:637.38px;width:60px;height:111.36000000000001px;background:#bebebe;"></div>
<div class="t" style="left:724.46px;transform:translateX(-50%);top:641.55px;font-size:11.5px;color:#111;font-weight:700;letter-spacing:0px;">6</div>
<div class="a" style="left:694.46px;top:748.74px;width:60px;height:18.559999999999945px;background:#767966;"></div>
<div class="t" style="left:724.46px;transform:translateX(-50%);top:752.71px;font-size:11.5px;color:#fff;font-weight:700;letter-spacing:0px;">1</div>
<div class="t" style="left:724.46px;transform:translateX(-50%);top:771.99px;font-size:11px;color:#333a3f;font-weight:700;letter-spacing:0px;">TOILETRIES</div>
<div class="a" style="left:787.1800000000001px;top:618.8199999999999px;width:60px;height:129.92000000000007px;background:#bebebe;"></div>
<div class="t" style="left:817.1800000000001px;transform:translateX(-50%);top:622.99px;font-size:11.5px;color:#111;font-weight:700;letter-spacing:0px;">7</div>
<div class="a" style="left:787.1800000000001px;top:748.74px;width:60px;height:18.559999999999945px;background:#767966;"></div>
<div class="t" style="left:817.1800000000001px;transform:translateX(-50%);top:752.71px;font-size:11.5px;color:#fff;font-weight:700;letter-spacing:0px;">1</div>
<div class="t" style="left:817.1800000000001px;transform:translateX(-50%);top:771.99px;font-size:11px;color:#333a3f;font-weight:700;letter-spacing:0px;">PERSONAL CARE</div>
<div class="a" style="left:879.9000000000001px;top:655.9399999999999px;width:60px;height:92.80000000000007px;background:#bebebe;"></div>
<div class="t" style="left:909.9000000000001px;transform:translateX(-50%);top:660.11px;font-size:11.5px;color:#111;font-weight:700;letter-spacing:0px;">5</div>
<div class="a" style="left:879.9000000000001px;top:748.74px;width:60px;height:18.559999999999945px;background:#767966;"></div>
<div class="t" style="left:909.9000000000001px;transform:translateX(-50%);top:752.71px;font-size:11.5px;color:#fff;font-weight:700;letter-spacing:0px;">1</div>
<div class="t" style="left:909.9000000000001px;transform:translateX(-50%);top:771.99px;font-size:11px;color:#333a3f;font-weight:700;letter-spacing:0px;">TECHNOLOGY</div>
<div class="a" style="left:972.6199999999999px;top:600.26px;width:60px;height:148.48000000000002px;background:#bebebe;"></div>
<div class="t" style="left:1002.6199999999999px;transform:translateX(-50%);top:604.43px;font-size:11.5px;color:#111;font-weight:700;letter-spacing:0px;">8</div>
<div class="a" style="left:972.6199999999999px;top:748.74px;width:60px;height:18.559999999999945px;background:#767966;"></div>
<div class="t" style="left:1002.6199999999999px;transform:translateX(-50%);top:752.71px;font-size:11.5px;color:#fff;font-weight:700;letter-spacing:0px;">1</div>
<div class="t" style="left:1002.6199999999999px;transform:translateX(-50%);top:771.99px;font-size:11px;color:#333a3f;font-weight:700;letter-spacing:0px;">MEDICATION</div>
<div class="a" style="left:1065.34px;top:526.02px;width:60px;height:222.72000000000003px;background:#bebebe;"></div>
<div class="t" style="left:1095.34px;transform:translateX(-50%);top:530.19px;font-size:11.5px;color:#111;font-weight:700;letter-spacing:0px;">12</div>
<div class="a" style="left:1065.34px;top:748.74px;width:60px;height:18.559999999999945px;background:#767966;"></div>
<div class="t" style="left:1095.34px;transform:translateX(-50%);top:752.71px;font-size:11.5px;color:#fff;font-weight:700;letter-spacing:0px;">1</div>
<div class="t" style="left:1095.34px;transform:translateX(-50%);top:771.99px;font-size:11px;color:#333a3f;font-weight:700;letter-spacing:0px;">DOCUMENTS</div>
<div class="a" style="left:1158.06px;top:693.06px;width:60px;height:37.120000000000005px;background:#bebebe;"></div>
<div class="t" style="left:1188.06px;transform:translateX(-50%);top:697.23px;font-size:11.5px;color:#111;font-weight:700;letter-spacing:0px;">2</div>
<div class="a" style="left:1158.06px;top:730.18px;width:60px;height:37.120000000000005px;background:#767966;"></div>
<div class="t" style="left:1188.06px;transform:translateX(-50%);top:734.15px;font-size:11.5px;color:#fff;font-weight:700;letter-spacing:0px;">2</div>
<div class="t" style="left:1188.06px;transform:translateX(-50%);top:771.99px;font-size:11px;color:#333a3f;font-weight:700;letter-spacing:0px;">BEAUTY</div>
<div class="a" style="left:1250.78px;top:600.26px;width:60px;height:148.48000000000002px;background:#bebebe;"></div>
<div class="t" style="left:1280.78px;transform:translateX(-50%);top:604.43px;font-size:11.5px;color:#111;font-weight:700;letter-spacing:0px;">8</div>
<div class="a" style="left:1250.78px;top:748.74px;width:60px;height:18.559999999999945px;background:#767966;"></div>
<div class="t" style="left:1280.78px;transform:translateX(-50%);top:752.71px;font-size:11.5px;color:#fff;font-weight:700;letter-spacing:0px;">1</div>
<div class="t" style="left:1280.78px;transform:translateX(-50%);top:771.99px;font-size:11px;color:#333a3f;font-weight:700;letter-spacing:0px;">MISCELLANEOUS</div>
<div class="a" style="left:384px;top:766.5px;width:960px;height:1.6px;background:#3a3a3a;"></div>
<div class="a" style="left:75px;top:812px;width:248.5px;height:18.8px;background:#767966;"></div>
<div class="t" style="left:199.25px;transform:translateX(-50%);top:817.11px;font-size:11.8px;color:#fff;font-weight:700;letter-spacing:0px;">CLOTHES</div>
<svg style="left:79.1px;top:833.8px" width="14.6" height="14.4" viewBox="0 0 14.6 14.4"><rect x="0" y="0" width="14.6" height="14.4" rx="2.5" fill="#7f7f7f"/><path d="M2,6.9 L5.5,10.2 L12.1,3.4" fill="none" stroke="#fff" stroke-width="1.5"/></svg>
<div class="t" style="left:101.5px;top:836.71px;font-size:11.8px;color:#3c4043;font-weight:400;letter-spacing:0px;">Underwear</div>
<div class="a" style="left:75px;top:849.5px;width:248.5px;height:19.0px;background:#e2d6c3;"></div>
<svg style="left:79.1px;top:853.0px" width="14.6" height="14.4" viewBox="0 0 14.6 14.4"><rect x="0" y="0" width="14.6" height="14.4" rx="2.5" fill="#75582f"/><path d="M2,6.9 L5.5,10.2 L12.1,3.4" fill="none" stroke="#fff" stroke-width="1.5"/></svg>
<div class="t" style="left:101.5px;top:855.91px;font-size:11.8px;color:#3c4043;font-weight:400;letter-spacing:0px;">Socks</div>
<svg style="left:79.1px;top:872.2px" width="14.6" height="14.4" viewBox="0 0 14.6 14.4"><rect x="0.8" y="0.8" width="13" height="12.8" rx="2" fill="none" stroke="#777" stroke-width="1.6"/></svg>
<div class="t" style="left:101.5px;top:875.11px;font-size:11.8px;color:#3c4043;font-weight:400;letter-spacing:0px;">Bras</div>
<div class="a" style="left:75px;top:887.9000000000001px;width:248.5px;height:19.0px;background:#e2d6c3;"></div>
<svg style="left:79.1px;top:891.4px" width="14.6" height="14.4" viewBox="0 0 14.6 14.4"><rect x="0.8" y="0.8" width="13" height="12.8" rx="2" fill="none" stroke="#7a5a2e" stroke-width="1.6"/></svg>
<div class="t" style="left:101.5px;top:894.31px;font-size:11.8px;color:#3c4043;font-weight:400;letter-spacing:0px;">Shirts</div>
<svg style="left:79.1px;top:910.6px" width="14.6" height="14.4" viewBox="0 0 14.6 14.4"><rect x="0.8" y="0.8" width="13" height="12.8" rx="2" fill="none" stroke="#777" stroke-width="1.6"/></svg>
<div class="t" style="left:101.5px;top:913.51px;font-size:11.8px;color:#3c4043;font-weight:400;letter-spacing:0px;">Trousers</div>
<div class="a" style="left:75px;top:926.3000000000002px;width:248.5px;height:19.0px;background:#e2d6c3;"></div>
<svg style="left:79.1px;top:929.8px" width="14.6" height="14.4" viewBox="0 0 14.6 14.4"><rect x="0.8" y="0.8" width="13" height="12.8" rx="2" fill="none" stroke="#7a5a2e" stroke-width="1.6"/></svg>
<div class="t" style="left:101.5px;top:932.71px;font-size:11.8px;color:#3c4043;font-weight:400;letter-spacing:0px;">Dresses</div>
<svg style="left:79.1px;top:949.0px" width="14.6" height="14.4" viewBox="0 0 14.6 14.4"><rect x="0.8" y="0.8" width="13" height="12.8" rx="2" fill="none" stroke="#777" stroke-width="1.6"/></svg>
<div class="t" style="left:101.5px;top:951.91px;font-size:11.8px;color:#3c4043;font-weight:400;letter-spacing:0px;">Sweaters</div>
<div class="a" style="left:75px;top:964.7000000000003px;width:248.5px;height:19.0px;background:#e2d6c3;"></div>
<svg style="left:79.1px;top:968.2px" width="14.6" height="14.4" viewBox="0 0 14.6 14.4"><rect x="0.8" y="0.8" width="13" height="12.8" rx="2" fill="none" stroke="#7a5a2e" stroke-width="1.6"/></svg>
<div class="t" style="left:101.5px;top:971.11px;font-size:11.8px;color:#3c4043;font-weight:400;letter-spacing:0px;">Jeans</div>
<svg style="left:79.1px;top:987.4px" width="14.6" height="14.4" viewBox="0 0 14.6 14.4"><rect x="0.8" y="0.8" width="13" height="12.8" rx="2" fill="none" stroke="#777" stroke-width="1.6"/></svg>
<div class="t" style="left:101.5px;top:990.31px;font-size:11.8px;color:#3c4043;font-weight:400;letter-spacing:0px;">Shorts</div>
<div class="a" style="left:75px;top:1003.1000000000004px;width:248.5px;height:19.0px;background:#e2d6c3;"></div>
<svg style="left:79.1px;top:1006.6px" width="14.6" height="14.4" viewBox="0 0 14.6 14.4"><rect x="0.8" y="0.8" width="13" height="12.8" rx="2" fill="none" stroke="#7a5a2e" stroke-width="1.6"/></svg>
<div class="t" style="left:101.5px;top:1009.51px;font-size:11.8px;color:#3c4043;font-weight:400;letter-spacing:0px;">Swimsuit</div>
<svg style="left:79.1px;top:1025.8px" width="14.6" height="14.4" viewBox="0 0 14.6 14.4"><rect x="0.8" y="0.8" width="13" height="12.8" rx="2" fill="none" stroke="#777" stroke-width="1.6"/></svg>
<div class="t" style="left:101.5px;top:1028.71px;font-size:11.8px;color:#3c4043;font-weight:400;letter-spacing:0px;">Jacket</div>
<div class="a" style="left:75px;top:1041.5000000000005px;width:248.5px;height:16.499999999999545px;background:#e2d6c3;"></div>
<div class="a" style="left:78.4px;top:1042.7000000000005px;width:20px;height:15.2999999999995px;overflow:hidden"><div style="position:relative;left:0;top:0"><svg style="left:0.7px;top:2.3px" width="14.6" height="14.4" viewBox="0 0 14.6 14.4"><rect x="0.8" y="0.8" width="13" height="12.8" rx="2" fill="none" stroke="#7a5a2e" stroke-width="1.6"/></svg></div></div>
<div class="a" style="left:346.5px;top:812px;width:253.70000000000005px;height:18.8px;background:#767966;"></div>
<div class="t" style="left:473.35px;transform:translateX(-50%);top:817.11px;font-size:11.8px;color:#fff;font-weight:700;letter-spacing:0px;">ACCESSORIES</div>
<svg style="left:353.3px;top:833.8px" width="14.6" height="14.4" viewBox="0 0 14.6 14.4"><rect x="0" y="0" width="14.6" height="14.4" rx="2.5" fill="#7f7f7f"/><path d="M2,6.9 L5.5,10.2 L12.1,3.4" fill="none" stroke="#fff" stroke-width="1.5"/></svg>
<div class="t" style="left:378px;top:836.71px;font-size:11.8px;color:#3c4043;font-weight:400;letter-spacing:0px;">Belts</div>
<div class="a" style="left:346.5px;top:849.5px;width:253.70000000000005px;height:19.0px;background:#e2d6c3;"></div>
<svg style="left:353.3px;top:853.0px" width="14.6" height="14.4" viewBox="0 0 14.6 14.4"><rect x="0" y="0" width="14.6" height="14.4" rx="2.5" fill="#75582f"/><path d="M2,6.9 L5.5,10.2 L12.1,3.4" fill="none" stroke="#fff" stroke-width="1.5"/></svg>
<div class="t" style="left:378px;top:855.91px;font-size:11.8px;color:#3c4043;font-weight:400;letter-spacing:0px;">Watch</div>
<svg style="left:353.3px;top:872.2px" width="14.6" height="14.4" viewBox="0 0 14.6 14.4"><rect x="0" y="0" width="14.6" height="14.4" rx="2.5" fill="#7f7f7f"/><path d="M2,6.9 L5.5,10.2 L12.1,3.4" fill="none" stroke="#fff" stroke-width="1.5"/></svg>
<div class="t" style="left:378px;top:875.11px;font-size:11.8px;color:#3c4043;font-weight:400;letter-spacing:0px;">Jewelry</div>
<div class="a" style="left:346.5px;top:887.9000000000001px;width:253.70000000000005px;height:19.0px;background:#e2d6c3;"></div>
<svg style="left:353.3px;top:891.4px" width="14.6" height="14.4" viewBox="0 0 14.6 14.4"><rect x="0" y="0" width="14.6" height="14.4" rx="2.5" fill="#75582f"/><path d="M2,6.9 L5.5,10.2 L12.1,3.4" fill="none" stroke="#fff" stroke-width="1.5"/></svg>
<div class="t" style="left:378px;top:894.31px;font-size:11.8px;color:#3c4043;font-weight:400;letter-spacing:0px;">Sunglasses</div>
<svg style="left:353.3px;top:910.6px" width="14.6" height="14.4" viewBox="0 0 14.6 14.4"><rect x="0" y="0" width="14.6" height="14.4" rx="2.5" fill="#7f7f7f"/><path d="M2,6.9 L5.5,10.2 L12.1,3.4" fill="none" stroke="#fff" stroke-width="1.5"/></svg>
<div class="t" style="left:378px;top:913.51px;font-size:11.8px;color:#3c4043;font-weight:400;letter-spacing:0px;">Scarves</div>
<div class="a" style="left:346.5px;top:926.3000000000002px;width:253.70000000000005px;height:19.0px;background:#e2d6c3;"></div>
<svg style="left:353.3px;top:929.8px" width="14.6" height="14.4" viewBox="0 0 14.6 14.4"><rect x="0" y="0" width="14.6" height="14.4" rx="2.5" fill="#75582f"/><path d="M2,6.9 L5.5,10.2 L12.1,3.4" fill="none" stroke="#fff" stroke-width="1.5"/></svg>
<div class="t" style="left:378px;top:932.71px;font-size:11.8px;color:#3c4043;font-weight:400;letter-spacing:0px;">Gloves</div>
<svg style="left:353.3px;top:949.0px" width="14.6" height="14.4" viewBox="0 0 14.6 14.4"><rect x="0" y="0" width="14.6" height="14.4" rx="2.5" fill="#7f7f7f"/><path d="M2,6.9 L5.5,10.2 L12.1,3.4" fill="none" stroke="#fff" stroke-width="1.5"/></svg>
<div class="t" style="left:378px;top:951.91px;font-size:11.8px;color:#3c4043;font-weight:400;letter-spacing:0px;">Hat</div>
<div class="a" style="left:346.5px;top:964.7000000000003px;width:253.70000000000005px;height:19.0px;background:#e2d6c3;"></div>
<svg style="left:353.3px;top:968.2px" width="14.6" height="14.4" viewBox="0 0 14.6 14.4"><rect x="0.8" y="0.8" width="13" height="12.8" rx="2" fill="none" stroke="#7a5a2e" stroke-width="1.6"/></svg>
<svg style="left:353.3px;top:987.4px" width="14.6" height="14.4" viewBox="0 0 14.6 14.4"><rect x="0.8" y="0.8" width="13" height="12.8" rx="2" fill="none" stroke="#777" stroke-width="1.6"/></svg>
<div class="a" style="left:346.5px;top:1003.1000000000004px;width:253.70000000000005px;height:19.0px;background:#e2d6c3;"></div>
<svg style="left:353.3px;top:1006.6px" width="14.6" height="14.4" viewBox="0 0 14.6 14.4"><rect x="0.8" y="0.8" width="13" height="12.8" rx="2" fill="none" stroke="#7a5a2e" stroke-width="1.6"/></svg>
<svg style="left:353.3px;top:1025.8px" width="14.6" height="14.4" viewBox="0 0 14.6 14.4"><rect x="0.8" y="0.8" width="13" height="12.8" rx="2" fill="none" stroke="#777" stroke-width="1.6"/></svg>
<div class="a" style="left:346.5px;top:1041.5000000000005px;width:253.70000000000005px;height:16.499999999999545px;background:#e2d6c3;"></div>
<div class="a" style="left:352.6px;top:1042.7000000000005px;width:20px;height:15.2999999999995px;overflow:hidden"><div style="position:relative;left:0;top:0"><svg style="left:0.7px;top:2.3px" width="14.6" height="14.4" viewBox="0 0 14.6 14.4"><rect x="0.8" y="0.8" width="13" height="12.8" rx="2" fill="none" stroke="#7a5a2e" stroke-width="1.6"/></svg></div></div>
<div class="a" style="left:627px;top:812px;width:236px;height:18.8px;background:#767966;"></div>
<div class="t" style="left:745.0px;transform:translateX(-50%);top:817.11px;font-size:11.8px;color:#fff;font-weight:700;letter-spacing:0px;">FOOTWEAR</div>
<svg style="left:634.5px;top:833.8px" width="14.6" height="14.4" viewBox="0 0 14.6 14.4"><rect x="0" y="0" width="14.6" height="14.4" rx="2.5" fill="#7f7f7f"/><path d="M2,6.9 L5.5,10.2 L12.1,3.4" fill="none" stroke="#fff" stroke-width="1.5"/></svg>
<div class="t" style="left:660px;top:836.71px;font-size:11.8px;color:#3c4043;font-weight:400;letter-spacing:0px;">Running shoes</div>
<div class="a" style="left:627px;top:849.5px;width:236px;height:19.0px;background:#e2d6c3;"></div>
<svg style="left:634.5px;top:853.0px" width="14.6" height="14.4" viewBox="0 0 14.6 14.4"><rect x="0.8" y="0.8" width="13" height="12.8" rx="2" fill="none" stroke="#7a5a2e" stroke-width="1.6"/></svg>
<div class="t" style="left:660px;top:855.91px;font-size:11.8px;color:#3c4043;font-weight:400;letter-spacing:0px;">Casual shoes</div>
<svg style="left:634.5px;top:872.2px" width="14.6" height="14.4" viewBox="0 0 14.6 14.4"><rect x="0.8" y="0.8" width="13" height="12.8" rx="2" fill="none" stroke="#777" stroke-width="1.6"/></svg>
<div class="t" style="left:660px;top:875.11px;font-size:11.8px;color:#3c4043;font-weight:400;letter-spacing:0px;">Formal shoes</div>
<div class="a" style="left:627px;top:887.9000000000001px;width:236px;height:19.0px;background:#e2d6c3;"></div>
<svg style="left:634.5px;top:891.4px" width="14.6" height="14.4" viewBox="0 0 14.6 14.4"><rect x="0" y="0" width="14.6" height="14.4" rx="2.5" fill="#75582f"/><path d="M2,6.9 L5.5,10.2 L12.1,3.4" fill="none" stroke="#fff" stroke-width="1.5"/></svg>
<div class="t" style="left:660px;top:894.31px;font-size:11.8px;color:#3c4043;font-weight:400;letter-spacing:0px;">Sandals</div>
<svg style="left:634.5px;top:910.6px" width="14.6" height="14.4" viewBox="0 0 14.6 14.4"><rect x="0.8" y="0.8" width="13" height="12.8" rx="2" fill="none" stroke="#777" stroke-width="1.6"/></svg>
<div class="t" style="left:660px;top:913.51px;font-size:11.8px;color:#3c4043;font-weight:400;letter-spacing:0px;">Slippers</div>
<div class="a" style="left:627px;top:926.3000000000002px;width:236px;height:19.0px;background:#e2d6c3;"></div>
<svg style="left:634.5px;top:929.8px" width="14.6" height="14.4" viewBox="0 0 14.6 14.4"><rect x="0" y="0" width="14.6" height="14.4" rx="2.5" fill="#75582f"/><path d="M2,6.9 L5.5,10.2 L12.1,3.4" fill="none" stroke="#fff" stroke-width="1.5"/></svg>
<div class="t" style="left:660px;top:932.71px;font-size:11.8px;color:#3c4043;font-weight:400;letter-spacing:0px;">Heels</div>
<svg style="left:634.5px;top:949.0px" width="14.6" height="14.4" viewBox="0 0 14.6 14.4"><rect x="0.8" y="0.8" width="13" height="12.8" rx="2" fill="none" stroke="#777" stroke-width="1.6"/></svg>
<div class="a" style="left:627px;top:964.7000000000003px;width:236px;height:19.0px;background:#e2d6c3;"></div>
<svg style="left:634.5px;top:968.2px" width="14.6" height="14.4" viewBox="0 0 14.6 14.4"><rect x="0.8" y="0.8" width="13" height="12.8" rx="2" fill="none" stroke="#7a5a2e" stroke-width="1.6"/></svg>
<svg style="left:634.5px;top:987.4px" width="14.6" height="14.4" viewBox="0 0 14.6 14.4"><rect x="0.8" y="0.8" width="13" height="12.8" rx="2" fill="none" stroke="#777" stroke-width="1.6"/></svg>
<div class="a" style="left:627px;top:1003.1000000000004px;width:236px;height:19.0px;background:#e2d6c3;"></div>
<svg style="left:634.5px;top:1006.6px" width="14.6" height="14.4" viewBox="0 0 14.6 14.4"><rect x="0.8" y="0.8" width="13" height="12.8" rx="2" fill="none" stroke="#7a5a2e" stroke-width="1.6"/></svg>
<svg style="left:634.5px;top:1025.8px" width="14.6" height="14.4" viewBox="0 0 14.6 14.4"><rect x="0.8" y="0.8" width="13" height="12.8" rx="2" fill="none" stroke="#777" stroke-width="1.6"/></svg>
<div class="a" style="left:627px;top:1041.5000000000005px;width:236px;height:16.499999999999545px;background:#e2d6c3;"></div>
<div class="a" style="left:633.8px;top:1042.7000000000005px;width:20px;height:15.2999999999995px;overflow:hidden"><div style="position:relative;left:0;top:0"><svg style="left:0.7px;top:2.3px" width="14.6" height="14.4" viewBox="0 0 14.6 14.4"><rect x="0.8" y="0.8" width="13" height="12.8" rx="2" fill="none" stroke="#7a5a2e" stroke-width="1.6"/></svg></div></div>
<div class="a" style="left:881.6px;top:812px;width:244.30000000000007px;height:18.8px;background:#767966;"></div>
<div class="t" style="left:1003.75px;transform:translateX(-50%);top:817.11px;font-size:11.8px;color:#fff;font-weight:700;letter-spacing:0px;">TOILETRIES</div>
<svg style="left:888.0px;top:833.8px" width="14.6" height="14.4" viewBox="0 0 14.6 14.4"><rect x="0.8" y="0.8" width="13" height="12.8" rx="2" fill="none" stroke="#777" stroke-width="1.6"/></svg>
<div class="t" style="left:912.5px;top:836.71px;font-size:11.8px;color:#3c4043;font-weight:400;letter-spacing:0px;">Toothbrush</div>
<div class="a" style="left:881.6px;top:849.5px;width:244.30000000000007px;height:19.0px;background:#e2d6c3;"></div>
<svg style="left:888.0px;top:853.0px" width="14.6" height="14.4" viewBox="0 0 14.6 14.4"><rect x="0.8" y="0.8" width="13" height="12.8" rx="2" fill="none" stroke="#7a5a2e" stroke-width="1.6"/></svg>
<div class="t" style="left:912.5px;top:855.91px;font-size:11.8px;color:#3c4043;font-weight:400;letter-spacing:0px;">Toothpaste</div>
<svg style="left:888.0px;top:872.2px" width="14.6" height="14.4" viewBox="0 0 14.6 14.4"><rect x="0.8" y="0.8" width="13" height="12.8" rx="2" fill="none" stroke="#777" stroke-width="1.6"/></svg>
<div class="t" style="left:912.5px;top:875.11px;font-size:11.8px;color:#3c4043;font-weight:400;letter-spacing:0px;">Dental floss</div>
<div class="a" style="left:881.6px;top:887.9000000000001px;width:244.30000000000007px;height:19.0px;background:#e2d6c3;"></div>
<svg style="left:888.0px;top:891.4px" width="14.6" height="14.4" viewBox="0 0 14.6 14.4"><rect x="0.8" y="0.8" width="13" height="12.8" rx="2" fill="none" stroke="#7a5a2e" stroke-width="1.6"/></svg>
<div class="t" style="left:912.5px;top:894.31px;font-size:11.8px;color:#3c4043;font-weight:400;letter-spacing:0px;">Shampoo</div>
<svg style="left:888.0px;top:910.6px" width="14.6" height="14.4" viewBox="0 0 14.6 14.4"><rect x="0.8" y="0.8" width="13" height="12.8" rx="2" fill="none" stroke="#777" stroke-width="1.6"/></svg>
<div class="t" style="left:912.5px;top:913.51px;font-size:11.8px;color:#3c4043;font-weight:400;letter-spacing:0px;">Conditioner</div>
<div class="a" style="left:881.6px;top:926.3000000000002px;width:244.30000000000007px;height:19.0px;background:#e2d6c3;"></div>
<svg style="left:888.0px;top:929.8px" width="14.6" height="14.4" viewBox="0 0 14.6 14.4"><rect x="0" y="0" width="14.6" height="14.4" rx="2.5" fill="#75582f"/><path d="M2,6.9 L5.5,10.2 L12.1,3.4" fill="none" stroke="#fff" stroke-width="1.5"/></svg>
<div class="t" style="left:912.5px;top:932.71px;font-size:11.8px;color:#3c4043;font-weight:400;letter-spacing:0px;">Hairbrush</div>
<svg style="left:888.0px;top:949.0px" width="14.6" height="14.4" viewBox="0 0 14.6 14.4"><rect x="0.8" y="0.8" width="13" height="12.8" rx="2" fill="none" stroke="#777" stroke-width="1.6"/></svg>
<div class="t" style="left:912.5px;top:951.91px;font-size:11.8px;color:#3c4043;font-weight:400;letter-spacing:0px;">Hairdryer</div>
<div class="a" style="left:881.6px;top:964.7000000000003px;width:244.30000000000007px;height:19.0px;background:#e2d6c3;"></div>
<svg style="left:888.0px;top:968.2px" width="14.6" height="14.4" viewBox="0 0 14.6 14.4"><rect x="0.8" y="0.8" width="13" height="12.8" rx="2" fill="none" stroke="#7a5a2e" stroke-width="1.6"/></svg>
<svg style="left:888.0px;top:987.4px" width="14.6" height="14.4" viewBox="0 0 14.6 14.4"><rect x="0.8" y="0.8" width="13" height="12.8" rx="2" fill="none" stroke="#777" stroke-width="1.6"/></svg>
<div class="a" style="left:881.6px;top:1003.1000000000004px;width:244.30000000000007px;height:19.0px;background:#e2d6c3;"></div>
<svg style="left:888.0px;top:1006.6px" width="14.6" height="14.4" viewBox="0 0 14.6 14.4"><rect x="0.8" y="0.8" width="13" height="12.8" rx="2" fill="none" stroke="#7a5a2e" stroke-width="1.6"/></svg>
<svg style="left:888.0px;top:1025.8px" width="14.6" height="14.4" viewBox="0 0 14.6 14.4"><rect x="0.8" y="0.8" width="13" height="12.8" rx="2" fill="none" stroke="#777" stroke-width="1.6"/></svg>
<div class="a" style="left:881.6px;top:1041.5000000000005px;width:244.30000000000007px;height:16.499999999999545px;background:#e2d6c3;"></div>
<div class="a" style="left:887.3px;top:1042.7000000000005px;width:20px;height:15.2999999999995px;overflow:hidden"><div style="position:relative;left:0;top:0"><svg style="left:0.7px;top:2.3px" width="14.6" height="14.4" viewBox="0 0 14.6 14.4"><rect x="0.8" y="0.8" width="13" height="12.8" rx="2" fill="none" stroke="#7a5a2e" stroke-width="1.6"/></svg></div></div>
<div class="a" style="left:1144.3px;top:812px;width:230.5px;height:18.8px;background:#767966;"></div>
<div class="t" style="left:1259.55px;transform:translateX(-50%);top:817.11px;font-size:11.8px;color:#fff;font-weight:700;letter-spacing:0px;">PERSONAL CARE</div>
<svg style="left:1151.3px;top:833.8px" width="14.6" height="14.4" viewBox="0 0 14.6 14.4"><rect x="0.8" y="0.8" width="13" height="12.8" rx="2" fill="none" stroke="#777" stroke-width="1.6"/></svg>
<div class="t" style="left:1176px;top:836.71px;font-size:11.8px;color:#3c4043;font-weight:400;letter-spacing:0px;">Deodorant</div>
<div class="a" style="left:1144.3px;top:849.5px;width:230.5px;height:19.0px;background:#e2d6c3;"></div>
<svg style="left:1151.3px;top:853.0px" width="14.6" height="14.4" viewBox="0 0 14.6 14.4"><rect x="0.8" y="0.8" width="13" height="12.8" rx="2" fill="none" stroke="#7a5a2e" stroke-width="1.6"/></svg>
<div class="t" style="left:1176px;top:855.91px;font-size:11.8px;color:#3c4043;font-weight:400;letter-spacing:0px;">Perfume</div>
<svg style="left:1151.3px;top:872.2px" width="14.6" height="14.4" viewBox="0 0 14.6 14.4"><rect x="0.8" y="0.8" width="13" height="12.8" rx="2" fill="none" stroke="#777" stroke-width="1.6"/></svg>
<div class="t" style="left:1176px;top:875.11px;font-size:11.8px;color:#3c4043;font-weight:400;letter-spacing:0px;">Moisturiser</div>
<div class="a" style="left:1144.3px;top:887.9000000000001px;width:230.5px;height:19.0px;background:#e2d6c3;"></div>
<svg style="left:1151.3px;top:891.4px" width="14.6" height="14.4" viewBox="0 0 14.6 14.4"><rect x="0.8" y="0.8" width="13" height="12.8" rx="2" fill="none" stroke="#7a5a2e" stroke-width="1.6"/></svg>
<div class="t" style="left:1176px;top:894.31px;font-size:11.8px;color:#3c4043;font-weight:400;letter-spacing:0px;">Feminine hygiene</div>
<svg style="left:1151.3px;top:910.6px" width="14.6" height="14.4" viewBox="0 0 14.6 14.4"><rect x="0.8" y="0.8" width="13" height="12.8" rx="2" fill="none" stroke="#777" stroke-width="1.6"/></svg>
<div class="t" style="left:1176px;top:913.51px;font-size:11.8px;color:#3c4043;font-weight:400;letter-spacing:0px;">Nail clippers</div>
<div class="a" style="left:1144.3px;top:926.3000000000002px;width:230.5px;height:19.0px;background:#e2d6c3;"></div>
<svg style="left:1151.3px;top:929.8px" width="14.6" height="14.4" viewBox="0 0 14.6 14.4"><rect x="0.8" y="0.8" width="13" height="12.8" rx="2" fill="none" stroke="#7a5a2e" stroke-width="1.6"/></svg>
<div class="t" style="left:1176px;top:932.71px;font-size:11.8px;color:#3c4043;font-weight:400;letter-spacing:0px;">Tissues</div>
<svg style="left:1151.3px;top:949.0px" width="14.6" height="14.4" viewBox="0 0 14.6 14.4"><rect x="0.8" y="0.8" width="13" height="12.8" rx="2" fill="none" stroke="#777" stroke-width="1.6"/></svg>
<div class="t" style="left:1176px;top:951.91px;font-size:11.8px;color:#3c4043;font-weight:400;letter-spacing:0px;">Lip balm</div>
<div class="a" style="left:1144.3px;top:964.7000000000003px;width:230.5px;height:19.0px;background:#e2d6c3;"></div>
<svg style="left:1151.3px;top:968.2px" width="14.6" height="14.4" viewBox="0 0 14.6 14.4"><rect x="0" y="0" width="14.6" height="14.4" rx="2.5" fill="#75582f"/><path d="M2,6.9 L5.5,10.2 L12.1,3.4" fill="none" stroke="#fff" stroke-width="1.5"/></svg>
<div class="t" style="left:1176px;top:971.11px;font-size:11.8px;color:#3c4043;font-weight:400;letter-spacing:0px;">Quick drying towel</div>
<svg style="left:1151.3px;top:987.4px" width="14.6" height="14.4" viewBox="0 0 14.6 14.4"><rect x="0.8" y="0.8" width="13" height="12.8" rx="2" fill="none" stroke="#777" stroke-width="1.6"/></svg>
<div class="a" style="left:1144.3px;top:1003.1000000000004px;width:230.5px;height:19.0px;background:#e2d6c3;"></div>
<svg style="left:1151.3px;top:1006.6px" width="14.6" height="14.4" viewBox="0 0 14.6 14.4"><rect x="0.8" y="0.8" width="13" height="12.8" rx="2" fill="none" stroke="#7a5a2e" stroke-width="1.6"/></svg>
<svg style="left:1151.3px;top:1025.8px" width="14.6" height="14.4" viewBox="0 0 14.6 14.4"><rect x="0.8" y="0.8" width="13" height="12.8" rx="2" fill="none" stroke="#777" stroke-width="1.6"/></svg>
<div class="a" style="left:1144.3px;top:1041.5000000000005px;width:230.5px;height:16.499999999999545px;background:#e2d6c3;"></div>
<div class="a" style="left:1150.6px;top:1042.7000000000005px;width:20px;height:15.2999999999995px;overflow:hidden"><div style="position:relative;left:0;top:0"><svg style="left:0.7px;top:2.3px" width="14.6" height="14.4" viewBox="0 0 14.6 14.4"><rect x="0.8" y="0.8" width="13" height="12.8" rx="2" fill="none" stroke="#7a5a2e" stroke-width="1.6"/></svg></div></div>
<div class="a" style="left:59px;top:1058px;width:1360px;height:11px;background:#fff;"></div>
<div class="a" style="left:60px;top:1060px;width:717px;height:7.7px;background:#dadce0;border-radius:4px;"></div>
<div class="a" style="left:1419px;top:322px;width:9px;height:747px;background:#fff;"></div>
<div class="a" style="left:1419px;top:322px;width:0.8px;height:747px;background:#e8eaed;"></div>
<div class="a" style="left:1421.5px;top:345.5px;width:6.5px;height:24px;background:#dadce0;border-radius:3px 0 0 3px;"></div>
<div class="a" style="left:1419px;top:1029px;width:9px;height:0.8px;background:#e0e0e0;"></div>
<div class="a" style="left:1419px;top:1043.5px;width:9px;height:0.8px;background:#e8e8f0;"></div>
<div class="a" style="left:1390.4px;top:1058px;width:0.8px;height:11px;background:#e8e8e8;"></div>
<div class="a" style="left:1404.5px;top:1058px;width:0.8px;height:11px;background:#e8e8e8;"></div>
<div class="a" style="left:1419px;top:1058px;width:9px;height:0.8px;background:#e8e8e8;"></div>
<svg style="left:1421.5px;top:1034.5px" width="5" height="3" viewBox="0 0 5 3"><path d="M0,3 L2.5,0 L5,3z" fill="#8a8a8a"/></svg>
<svg style="left:1421.5px;top:1049px" width="5" height="3" viewBox="0 0 5 3"><path d="M0,0 L2.5,3 L5,0z" fill="#8a8a8a"/></svg>
<svg style="left:1395px;top:1061.5px" width="3" height="5" viewBox="0 0 3 5"><path d="M3,0 L0,2.5 L3,5z" fill="#8a8a8a"/></svg>
<svg style="left:1410px;top:1061.5px" width="3" height="5" viewBox="0 0 3 5"><path d="M0,0 L3,2.5 L0,5z" fill="#8a8a8a"/></svg>
<div class="a" style="left:17px;top:1069px;width:1411px;height:36px;background:;background:linear-gradient(#f3f4f5,#e9eaec);"></div>
<div class="a" style="left:17px;top:1058px;width:42px;height:11px;background:#f8f9fa;"></div>
<div class="a" style="left:58.5px;top:1058px;width:1px;height:11px;background:#dadce0;"></div>
<div class="a" style="left:17px;top:1057.5px;width:42px;height:1px;background:#d4d4d4;"></div>
<svg style="left:63px;top:1081.5px" width="10" height="10" viewBox="0 0 10 10"><path d="M5,0.5 V9.5 M0.5,5 H9.5" stroke="#5f6368" stroke-width="1.6"/></svg>
<svg style="left:91px;top:1081.5px" width="11.5" height="10" viewBox="0 0 11.5 10"><path d="M0,1 H11.5 M0,3.7 H11.5 M0,6.3 H11.5 M0,9 H11.5" stroke="#5f6368" stroke-width="1.4"/></svg>
<div class="a" style="left:123.2px;top:1071px;width:1px;height:34px;background:#e3e3e3;"></div>
<div class="t" style="left:138px;top:1080.15px;font-size:14px;color:#5f6368;font-weight:400;letter-spacing:0.45px;-webkit-text-stroke:0.35px #5f6368;">Instruction</div>
<svg style="left:216px;top:1085px" width="6.5" height="3.25" viewBox="0 0 6.5 3.25"><path d="M0,0 H6.5 L3.25,3.25z" fill="#80868b"/></svg>
<div class="a" style="left:238.3px;top:1069px;width:120.3px;height:36px;background:#fafbfb;"></div>
<div class="t" style="left:253.2px;top:1080.15px;font-size:14px;color:#188038;font-weight:400;letter-spacing:-0.15px;-webkit-text-stroke:0.4px #188038;">Packing List</div>
<svg style="left:337px;top:1085px" width="7" height="3.5" viewBox="0 0 7 3.5"><path d="M0,0 H7 L3.5,3.5z" fill="#188038"/></svg>
<div class="a" style="left:358.6px;top:1071px;width:1px;height:34px;background:#e3e3e3;"></div>
<div class="t" style="left:374.2px;top:1080.15px;font-size:14px;color:#5f6368;font-weight:400;letter-spacing:-0.35px;-webkit-text-stroke:0.35px #5f6368;">Formula</div>
<svg style="left:433.4px;top:1085px" width="7" height="3.5" viewBox="0 0 7 3.5"><path d="M0,0 H7 L3.5,3.5z" fill="#80868b"/></svg>
<div class="a" style="left:455.7px;top:1071px;width:1px;height:34px;background:#e3e3e3;"></div>
<svg style="left:1343.8px;top:1079px" width="16" height="19" viewBox="0 0 17 19" preserveAspectRatio="none"><path d="M2,0 H15 a2,2 0 0 1 2,2 V14.5 a2,2 0 0 1 -2,2 H10.5 L8.5,18.5 L6.5,16.5 H2 a2,2 0 0 1 -2,-2 V2 a2,2 0 0 1 2,-2z" fill="#5f6368"/><path d="M8.5,2.8 Q9.3,7.2 13.7,8.2 Q9.3,9.2 8.5,13.6 Q7.7,9.2 3.3,8.2 Q7.7,7.2 8.5,2.8z" fill="#fff"/></svg>
<svg style="left:1400.5px;top:1084px" width="7" height="11" viewBox="0 0 7 11"><path d="M6,1 L1.5,5.5 L6,10" fill="none" stroke="#5f6368" stroke-width="1.6"/></svg>
<div class="a" style="left:1419px;top:322.6px;width:9px;height:21.4px;background:#f8f9fa;"></div></body></html>
